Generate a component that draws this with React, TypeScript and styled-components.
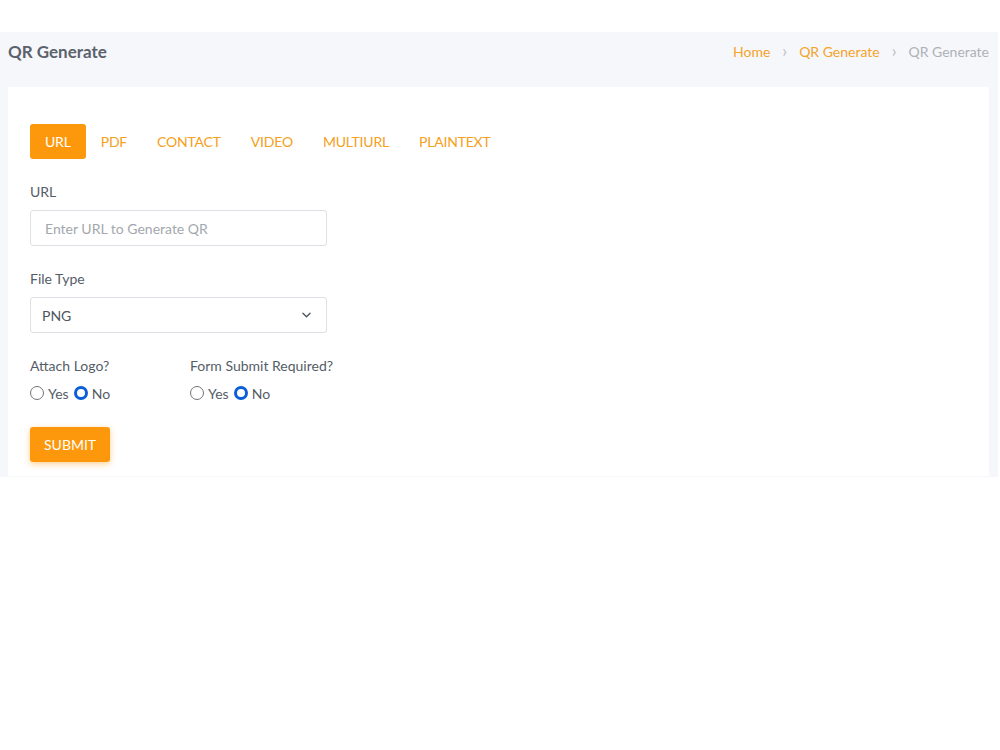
import styled, { createGlobalStyle } from "styled-components";
import { useState } from "react";

const GlobalStyle = createGlobalStyle`
  body {
    margin: 0;
    background: #ffffff;
    font-family: Lato, "Noto Sans", sans-serif;
  }
`;

const tabs = ["URL", "PDF", "CONTACT", "VIDEO", "MULTIURL", "PLAINTEXT"];

interface RadioChoiceProps {
  name: string;
  value: string;
  setValue: (v: string) => void;
}

const RadioChoice = ({ name, value, setValue }: RadioChoiceProps) => (
  <RadioRow>
    {["Yes", "No"].map((opt) => (
      <RadioLabel key={opt}>
        <RadioInput
          type="radio"
          name={name}
          checked={value === opt}
          onChange={() => setValue(opt)}
        />
        {opt}
      </RadioLabel>
    ))}
  </RadioRow>
);

const App = () => {
  const [activeTab, setActiveTab] = useState("URL");
  const [logo, setLogo] = useState("No");
  const [formRequired, setFormRequired] = useState("No");

  return (
    <>
      <GlobalStyle />
      <Page>
        <Section>
          <PageHeader>
            <PageTitle>QR Generate</PageTitle>
            <Breadcrumb>
              <Crumb>Home</Crumb>
              <Separator>›</Separator>
              <Crumb>QR Generate</Crumb>
              <Separator>›</Separator>
              <Crumb $current>QR Generate</Crumb>
            </Breadcrumb>
          </PageHeader>
          <Card>
            <TabList>
              {tabs.map((t) => (
                <Tab
                  key={t}
                  $active={t === activeTab}
                  onClick={() => setActiveTab(t)}
                >
                  {t}
                </Tab>
              ))}
            </TabList>

            <FormGroup>
              <Label>URL</Label>
              <TextInput placeholder="Enter URL to Generate QR" />
            </FormGroup>

            <FormGroup>
              <Label>File Type</Label>
              <SelectWrap>
                <Select defaultValue="PNG">
                  <option>PNG</option>
                  <option>JPG</option>
                  <option>SVG</option>
                </Select>
                <Chevron viewBox="0 0 10 6" aria-hidden>
                  <path
                    d="M1 1l4 4 4-4"
                    fill="none"
                    stroke="#495057"
                    strokeWidth="1.4"
                    strokeLinecap="round"
                    strokeLinejoin="round"
                  />
                </Chevron>
              </SelectWrap>
            </FormGroup>

            <ChoiceRow>
              <ChoiceColumn>
                <Label>Attach Logo?</Label>
                <RadioChoice name="logo" value={logo} setValue={setLogo} />
              </ChoiceColumn>
              <ChoiceColumn>
                <Label>Form Submit Required?</Label>
                <RadioChoice
                  name="form"
                  value={formRequired}
                  setValue={setFormRequired}
                />
              </ChoiceColumn>
            </ChoiceRow>

            <SubmitButton>SUBMIT</SubmitButton>
          </Card>
        </Section>
      </Page>
    </>
  );
};

const Page = styled.div`
  padding-top: 32px;
  width: 998px;
`;

const Section = styled.div`
  background: #f6f7fb;
  padding: 0 9px 1px 8px;
`;

const PageHeader = styled.div`
  display: flex;
  align-items: center;
  justify-content: space-between;
  padding: 10px 0 25px;
  height: 20px;
`;

const PageTitle = styled.h1`
  margin: 0;
  font-size: 17px;
  font-weight: 700;
  color: #5b626b;
  line-height: 20px;
`;

const Breadcrumb = styled.div`
  display: flex;
  align-items: center;
  gap: 10px;
  font-size: 14px;
  line-height: 20px;
`;

const Crumb = styled.span<{ $current?: boolean }>`
  color: ${(p) => (p.$current ? "#adb2b8" : "#f4a32a")};
`;

const Separator = styled.span`
  color: #b8bcc2;
  font-size: 17px;
  padding: 0 2px 2px;
`;

const Card = styled.div`
  background: #ffffff;
  padding: 37px 22px 14px;
`;

const TabList = styled.div`
  display: flex;
  margin-bottom: 22px;
`;

const Tab = styled.button<{ $active: boolean }>`
  height: 35px;
  padding: 0 15px;
  border: none;
  border-radius: 3px;
  font-family: inherit;
  font-size: 14px;
  letter-spacing: -0.2px;
  cursor: pointer;
  background: ${(p) => (p.$active ? "#fd980c" : "transparent")};
  color: ${(p) => (p.$active ? "#ffffff" : "#f4a020")};
`;

const FormGroup = styled.div`
  margin-bottom: 22px;
`;

const Label = styled.div`
  font-size: 14px;
  line-height: 22px;
  color: #555d67;
  margin-bottom: 7px;
`;

const TextInput = styled.input`
  box-sizing: border-box;
  width: 297px;
  height: 36px;
  padding: 0 14px;
  border: 1px solid #dde0e4;
  border-radius: 3px;
  font-family: inherit;
  font-size: 14px;
  color: #495057;
  outline: none;
  &::placeholder {
    color: #a3a8ae;
  }
`;

const SelectWrap = styled.div`
  position: relative;
  width: 297px;
`;

const Select = styled.select`
  box-sizing: border-box;
  width: 100%;
  height: 36px;
  padding: 0 11px;
  border: 1px solid #dde0e4;
  border-radius: 3px;
  background: #ffffff;
  font-family: inherit;
  font-size: 14px;
  color: #4f565e;
  appearance: none;
  outline: none;
`;

const Chevron = styled.svg`
  position: absolute;
  right: 16px;
  top: 15px;
  width: 9px;
  height: 6px;
  pointer-events: none;
`;

const ChoiceRow = styled.div`
  display: flex;
  margin-bottom: 23px;
`;

const ChoiceColumn = styled.div`
  width: 160px;
  ${Label} {
    margin-bottom: 5px;
  }
`;

const RadioRow = styled.div`
  display: flex;
  align-items: center;
  gap: 5px;
  height: 22px;
`;

const RadioLabel = styled.label`
  display: flex;
  align-items: center;
  gap: 4px;
  font-size: 14px;
  color: #555d67;
`;

const RadioInput = styled.input`
  appearance: none;
  box-sizing: border-box;
  width: 14px;
  height: 14px;
  margin: 0;
  border-radius: 50%;
  border: 1px solid #6f7378;
  background: #ffffff;
  &:checked {
    border: 3px solid #0a5fd8;
  }
`;

const SubmitButton = styled.button`
  display: block;
  height: 35px;
  padding: 0 14px;
  border: none;
  border-radius: 3px;
  background: #fd980c;
  color: #ffffff;
  font-family: inherit;
  font-size: 14px;
  box-shadow: 0 2px 6px rgba(253, 152, 12, 0.45);
  cursor: pointer;
`;

export default App;
